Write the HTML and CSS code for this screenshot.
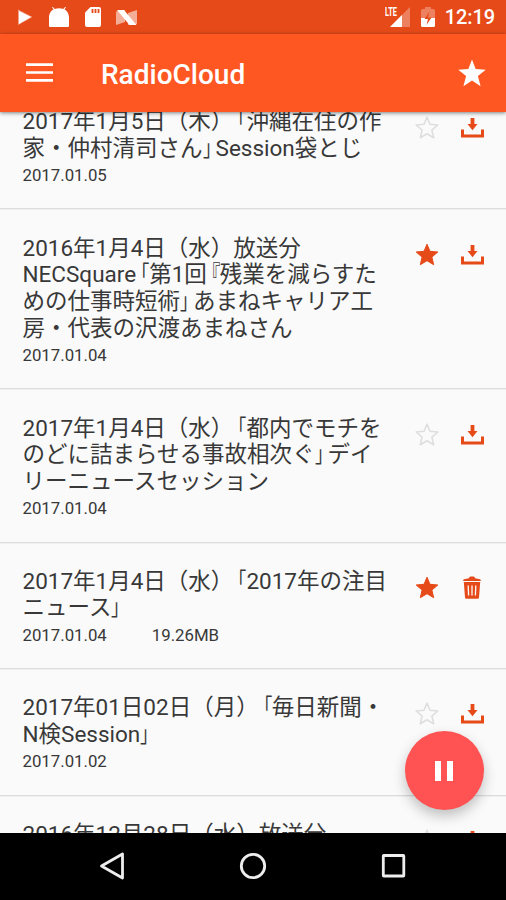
FILE: index.html
```html
<!DOCTYPE html>
<html lang="ja">
<head>
<meta charset="utf-8">
<title>RadioCloud</title>
<link rel="stylesheet" href="styles.css">
</head>
<body>
<svg class="defs" aria-hidden="true">
  <symbol id="star" viewBox="0 0 24 24"><path d="M12 1.2l3 7.1 7.8.7-5.9 5.1 1.8 7.6L12 17.7l-6.7 4 1.8-7.6L1.2 9l7.8-.7z" stroke-linejoin="round"/></symbol>
  <symbol id="download" viewBox="0 0 23 20"><path d="M9.600 0h3.800v6h3.100L11.500 12.200 6.500 6h3.100zM0 11.500h3v5h17v-5h3V19.500H0z"/></symbol>
  <symbol id="trash" viewBox="0 0 18 23"><path d="M6 2.300Q6 .4 7.500.4h3Q12 .4 12 2.300l5 .9q.8.2.8 1.700H.2Q.2 3.400 1 3.200zM.8 6h16.400l-1.200 15.500Q15.900 22.700 14.500 22.700H3.500Q2.100 22.700 2 21.500z"/><path class="slots" d="M5.200 9.500l.4 10M9 9.500v10M12.800 9.500l-.4 10"/></symbol>
</svg>
<div class="screen">
  <div class="status">
    <div class="notices">
      <svg width="15" height="17" viewBox="0 0 15 17"><path d="M0 .5L14.500 8 0 16z" fill="#fff" opacity=".5"/><path d="M1 2L13 8 1 15z" fill="#fff"/></svg>
      <svg width="20" height="20" viewBox="0 0 20 20"><path d="M0 19V10.500C0 6.500 2.300 3.500 4.700 2.300L3 .5l.8-.6 2 2Q10 .5 14.200 1.900l2-2 .8.6-1.700 1.800C17.700 3.500 20 6.500 20 10.500V19q0 1-1 1H1q-1 0-1-1z" fill="#fff"/></svg>
      <svg width="16" height="20" viewBox="0 0 16 20"><path d="M5.500 0H14q2 0 2 2v16q0 2-2 2H2q-2 0-2-2V5.500z" fill="#fff"/><path d="M7.500 2v4M10.500 2v4M13.500 2v4" stroke="#e64a19" stroke-width="1.800"/></svg>
      <svg width="21" height="17" viewBox="0 0 21 17"><path d="M0 2.500L9 1v12L0 16zM12 4L21 1v14l-9 1z" fill="#fff" opacity=".55"/><path d="M1 1h7l12.500 15h-7z" fill="#fff"/></svg>
    </div>
    <div class="system">
      <span class="lte">LTE</span>
      <svg class="signal" width="20" height="20" viewBox="0 0 20 20"><path d="M20 0v20H0z" fill="#fff" opacity=".3"/><path d="M12 8v12H0z" fill="#fff"/></svg>
      <svg class="battery" width="14" height="20" viewBox="0 0 14 20"><path d="M4 0h6v2h2.500Q14 2 14 3.500V11H0V3.500Q0 2 1.500 2H4z" fill="#fff" opacity=".3"/><path d="M0 11h14v7.500q0 1.500-1.500 1.500h-11Q0 20 0 18.500z" fill="#fff"/><path d="M8.500 4.500L3.500 12H7l-1.500 6 5-7.500H7z" fill="#e64a19"/></svg>
      <span class="clock">12:19</span>
    </div>
  </div>
  <header class="bar">
    <svg class="menu" width="27" height="19" viewBox="0 0 27 19"><path d="M0 1.600h27M0 9.500h27M0 17.400h27" stroke="#fff" stroke-width="2.700"/></svg>
    <h1>RadioCloud</h1>
    <svg class="fav" width="30" height="30" viewBox="0 0 24 24"><path d="M12 1.200l2.900 7.600 8.100.5-6.300 5.100 2.200 8.100-6.900-4.500-6.900 4.500 2.200-8.100L1 9.300l8.100-.5z" fill="#fff"/></svg>
  </header>
  <main class="viewport">
    <ul class="list">
      <li class="item">
        <div class="text"><h2>2017年1月5日（木）<i class="open">「</i>沖縄在住の作<br>家・仲村清司さん<i>」</i>Session袋とじ</h2><p>2017.01.05</p></div>
        <svg class="star off"><use href="#star"/></svg><svg class="download"><use href="#download"/></svg>
      </li>
      <li class="item">
        <div class="text"><h2>2016年1月4日（水）放送分<br>NECSquare<i class="open">「</i>第1回<i class="open">『</i>残業を減らすた<br>めの仕事時短術<i>」</i>あまねキャリア工<br>房・代表の沢渡あまねさん</h2><p>2017.01.04</p></div>
        <svg class="star on"><use href="#star"/></svg><svg class="download"><use href="#download"/></svg>
      </li>
      <li class="item">
        <div class="text"><h2>2017年1月4日（水）<i class="open">「</i>都内でモチを<br>のどに詰まらせる事故相次ぐ<i>」</i>デイ<br>リーニュースセッション</h2><p>2017.01.04</p></div>
        <svg class="star off"><use href="#star"/></svg><svg class="download"><use href="#download"/></svg>
      </li>
      <li class="item">
        <div class="text"><h2>2017年1月4日（水）<i class="open">「</i>2017年の注目<br>ニュース<i>」</i></h2><p>2017.01.04<span class="size">19.26MB</span></p></div>
        <svg class="star on"><use href="#star"/></svg><svg class="trash"><use href="#trash"/></svg>
      </li>
      <li class="item">
        <div class="text"><h2>2017年01日02日（月）<i class="open">「</i>毎日新聞・<br>N検Session<i>」</i></h2><p>2017.01.02</p></div>
        <svg class="star off"><use href="#star"/></svg><svg class="download"><use href="#download"/></svg>
      </li>
      <li class="item">
        <div class="text"><h2>2016年12月28日（水）放送分</h2></div>
        <svg class="star off"><use href="#star"/></svg><svg class="download"><use href="#download"/></svg>
      </li>
    </ul>
    <button class="fab" aria-label="一時停止"><svg width="18" height="20" viewBox="0 0 18 20"><path d="M0 0h6v20H0zM12 0h6v20h-6z" fill="#fff"/></svg></button>
  </main>
  <nav class="nav">
    <svg width="28" height="28" viewBox="0 0 28 28"><path d="M24.500 2v24L3.500 14z"/></svg>
    <svg width="28" height="28" viewBox="0 0 28 28"><circle cx="14" cy="14" r="11.700"/></svg>
    <svg width="28" height="28" viewBox="0 0 28 28"><rect x="3.300" y="3.500" width="20.500" height="20.500" rx=".5"/></svg>
  </nav>
</div>
</body>
</html>
```
FILE: styles.css
```css
* { box-sizing: border-box; }
body { margin: 0; background: #000; font-family: Roboto, "Noto Sans CJK JP", sans-serif; }
h1, h2, p, ul { margin: 0; padding: 0; }
.defs { position: absolute; width: 0; height: 0; }
.screen { width: 506px; height: 900px; display: flex; flex-direction: column; overflow: hidden; }

.status { flex: none; height: 34px; background: #e64a19; display: flex; justify-content: space-between; padding: 0 11px 0 18px; color: #fff; }
.notices, .system { display: flex; align-items: center; }
.notices svg:nth-child(2) { margin-left: 16px; }
.notices svg:nth-child(3) { margin-left: 16px; }
.notices svg:nth-child(4) { margin-left: 15px; }
.lte { font-size: 12px; font-weight: 700; line-height: 10px; width: 13px; height: 10px; margin-right: -8px; margin-bottom: 11px; transform: scaleX(.62); transform-origin: left; }
.battery { margin-left: 11px; }
.clock { margin-left: 10px; font-size: 20px; font-weight: 500; line-height: 36px; letter-spacing: -.1px; }

.bar { flex: none; height: 78px; background: #ff5722; display: flex; align-items: center; padding: 0 19px 0 26px; color: #fff; position: relative; z-index: 1; box-shadow: 0 1px 4px rgba(0, 0, 0, .5); }
.menu { margin-top: -1px; }
.bar h1 { margin-left: 48px; margin-top: 3px; font-size: 28px; font-weight: 500; line-height: 34px; flex: 1; }

.viewport { flex: 1; min-height: 0; background: #fafafa; overflow: hidden; position: relative; }
.list { list-style: none; margin-top: -29px; }
.item { display: flex; align-items: flex-start; padding: 25.200px 22px 25.400px 22.500px; border-bottom: 1px solid #dcdcdc; box-shadow: 0 1px #f0f0f0; }
.text { flex: 1; color: #383838; }
.text h2 { font-size: 22.500px; font-weight: 400; line-height: 26.700px; white-space: nowrap; }
.text i { display: inline-block; width: 13px; height: 26px; line-height: 26px; vertical-align: top; font-style: normal; font-feature-settings: "halt"; transform: scaleX(.78); transform-origin: left; }
.text .open { padding-left: 2px; transform-origin: right; }
.text p { font-size: 16.800px; line-height: 16px; margin-top: 5.500px; }
.size { margin-left: 45px; }
.star { flex: none; width: 24px; height: 24px; margin: 8px 22px 0 0; }
.star.on { fill: #e64a19; stroke: #e64a19; }
.star.off { fill: none; stroke: #dedede; stroke-width: 1.600; }
.download { flex: none; width: 23px; height: 20px; margin-top: 10px; fill: #e64a19; }
.trash { flex: none; width: 18px; height: 23px; margin: 8px 3px 0 2px; fill: #e64a19; }
.slots { fill: none; stroke: #fafafa; stroke-width: 1.300; }

.fab { position: absolute; right: 22.500px; bottom: 23px; width: 79px; height: 79px; padding: 0; border: 0; border-radius: 50%; background: #ff5252; display: flex; align-items: center; justify-content: center; box-shadow: 0 6px 13px rgba(0, 0, 0, .24); }

.nav { flex: none; height: 67px; background: #000; display: flex; justify-content: space-between; align-items: center; padding: 0 98px 1px; }
.nav svg { fill: none; stroke: #eee; stroke-width: 2.800; stroke-linejoin: round; }
```
